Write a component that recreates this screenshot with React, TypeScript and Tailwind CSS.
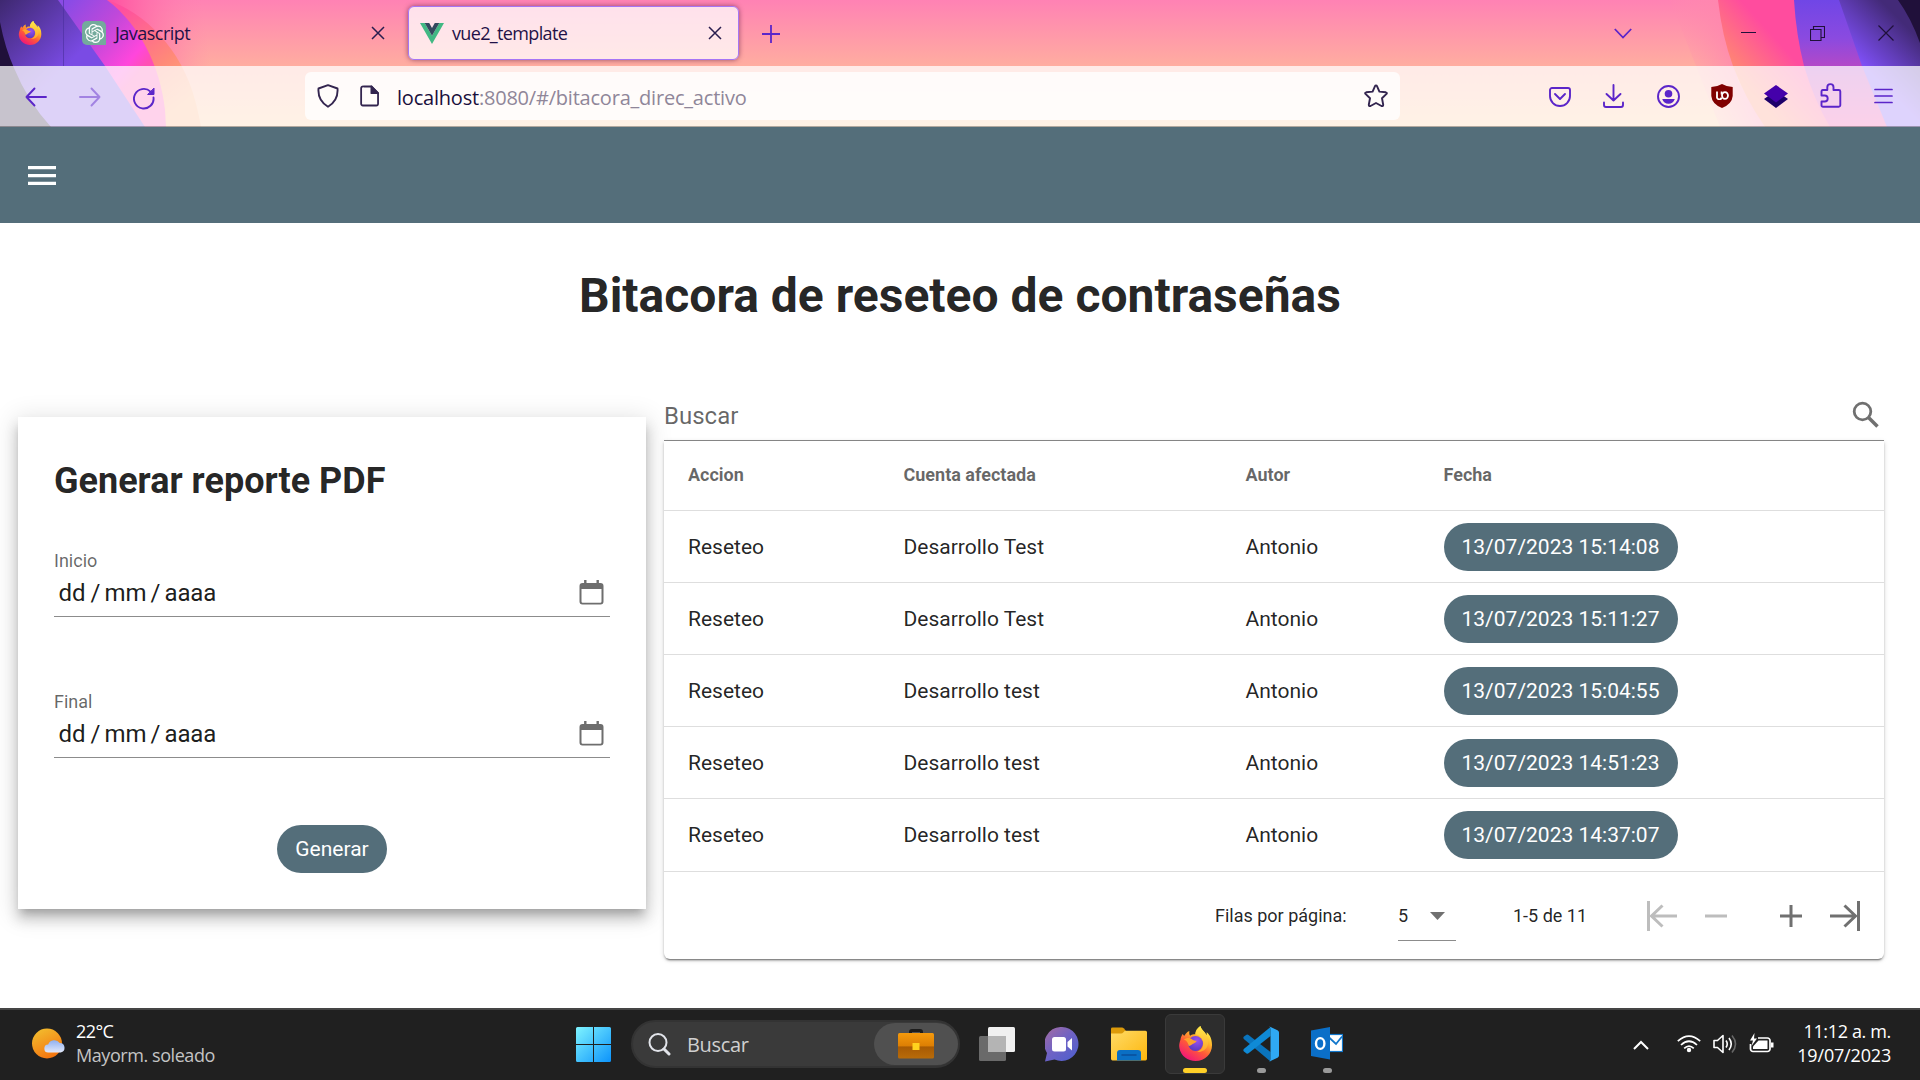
import React from "react";
import { SiOpenai } from "react-icons/si";

const segoe = "font-['Open_Sans','Noto_Sans',sans-serif]";

function ThemeArt() {
  return (
    <svg className="absolute inset-0 h-[127px] w-full" viewBox="0 0 1920 127" preserveAspectRatio="none">
      <defs>
        <linearGradient id="sky" x1="0" y1="0" x2="0" y2="1">
          <stop offset="0" stopColor="#ff82b4" />
          <stop offset="0.52" stopColor="#ffadA0" />
          <stop offset="1" stopColor="#ffcb9c" />
        </linearGradient>
        <linearGradient id="warm" gradientUnits="userSpaceOnUse" x1="120" y1="10" x2="190" y2="100">
          <stop offset="0" stopColor="#ff4f9f" />
          <stop offset="0.6" stopColor="#ff8a78" />
          <stop offset="1" stopColor="#ffb07c" />
        </linearGradient>
        <linearGradient id="pinkGlow" gradientUnits="userSpaceOnUse" x1="107" y1="0" x2="200" y2="-14">
          <stop offset="0" stopColor="#ff4fa0" />
          <stop offset="1" stopColor="#ff82b0" stopOpacity="0" />
        </linearGradient>
        <linearGradient id="magenta" gradientUnits="userSpaceOnUse" x1="70" y1="0" x2="145" y2="66">
          <stop offset="0" stopColor="#8a4be6" />
          <stop offset="0.45" stopColor="#c048da" />
          <stop offset="0.85" stopColor="#ff46dc" />
          <stop offset="1" stopColor="#ff4fb4" />
        </linearGradient>
        <linearGradient id="indigo" gradientUnits="userSpaceOnUse" x1="0" y1="0" x2="66" y2="66">
          <stop offset="0" stopColor="#3e2870" />
          <stop offset="1" stopColor="#7a4be4" />
        </linearGradient>
        <linearGradient id="rightWarm" gradientUnits="userSpaceOnUse" x1="1728" y1="66" x2="1768" y2="30">
          <stop offset="0" stopColor="#ff8a70" />
          <stop offset="1" stopColor="#ff4c9e" />
        </linearGradient>
        <linearGradient id="rightViolet" gradientUnits="userSpaceOnUse" x1="0" y1="0" x2="0" y2="126">
          <stop offset="0" stopColor="#7046e6" />
          <stop offset="0.3" stopColor="#8a4ae0" />
          <stop offset="0.6" stopColor="#c048c0" />
          <stop offset="1" stopColor="#f048a8" />
        </linearGradient>
        <linearGradient id="rightIndigo" gradientUnits="userSpaceOnUse" x1="1864" y1="66" x2="1905" y2="25">
          <stop offset="0" stopColor="#7e4ff5" />
          <stop offset="1" stopColor="#432a78" />
        </linearGradient>
        <linearGradient id="rightFade" gradientUnits="userSpaceOnUse" x1="1680" y1="60" x2="1740" y2="40">
          <stop offset="0" stopColor="#ff8cae" stopOpacity="0" />
          <stop offset="1" stopColor="#ff86ae" />
        </linearGradient>
      </defs>
      <rect width="1920" height="127" fill="url(#sky)" />
      <path d="M107 0H220V66H150Z" fill="url(#pinkGlow)" />
      <path d="M107 0C145 12 182 50 195 100Q199 115 201 127H60V0Z" fill="url(#warm)" />
      <path d="M58 0H107C140 25 160 66 165 110L166 127H60Z" fill="url(#magenta)" />
      <path d="M0 0H58L105 66L145 127H0Z" fill="url(#indigo)" />
      <path d="M0 22Q5 48 14 68Q28 102 51 127H0Z" fill="#20103a" />
      <path d="M1670 0H1722L1738 80L1765 127H1720Z" fill="url(#rightFade)" />
      <path d="M1718 0Q1722 36 1733 66Q1745 98 1765 127H1920V0Z" fill="url(#rightWarm)" />
      <path d="M1794 0Q1796 34 1804 66Q1814 100 1830 127H1920V0Z" fill="url(#rightViolet)" />
      <path d="M1839 0L1862 66L1887 127H1920V0Z" fill="url(#rightIndigo)" />
      <path d="M1898 0Q1911 18 1920 43V0Z" fill="#20103a" />
    </svg>
  );
}

function Firefox({ size, id }: { size: number; id: string }) {
  return (
    <svg width={size} height={size} viewBox="0 0 36 36" className="shrink-0">
      <defs>
        <linearGradient id={id + "a"} x1="0.85" y1="0.1" x2="0.3" y2="1">
          <stop offset="0" stopColor="#fff44f" />
          <stop offset="0.3" stopColor="#ffb52a" />
          <stop offset="0.6" stopColor="#ff5a38" />
          <stop offset="1" stopColor="#f0157a" />
        </linearGradient>
        <radialGradient id={id + "b"} cx="0.6" cy="0.3" r="0.7">
          <stop offset="0" stopColor="#9a50f0" />
          <stop offset="1" stopColor="#5a3ac0" />
        </radialGradient>
        <linearGradient id={id + "c"} x1="0" y1="0" x2="0" y2="1">
          <stop offset="0" stopColor="#ffe94a" />
          <stop offset="1" stopColor="#ffa52a" />
        </linearGradient>
      </defs>
      <path d="M5 8C3.5 10 2.8 12 2.6 14C1.500 17 .8 20 1.500 23C3 31 10 36 18 36C28 36 35 28.500 35 19.500C35 13.500 32.800 9 29.500 6.500C29.500 7.500 29.600 8.500 29.400 9.500C27.500 5 24 4 23 0C20 2 18 5 17.800 8.500C15 8 13.500 9 12.500 10C11.500 9 11.400 6.800 11.700 5.200C9.300 6 7.800 8 6.600 10C5.800 9.800 5.200 9 5 8Z" fill={`url(#${id}a)`} />
      <circle cx="18" cy="18" r="7.700" fill={`url(#${id}b)`} />
      <path d="M23 0C20 2 18 5 17.800 8.500C22 9 26.500 13 26 19C25.500 23 23 25.500 19.500 26.500C26 27.500 31 23 31 16.500C31 8 24.500 6 23 0Z" fill={`url(#${id}c)`} />
      <path d="M6 14C9 11.500 13 12 15 14.200C16 15.200 18 15 19.200 15.200C18.800 17 16.500 17.800 15 18.500C13.500 19.500 13 20.500 11 20.500C10 16.500 8.500 15 6 14Z" fill="#ffa22e" />
    </svg>
  );
}

function CloseX() {
  return (
    <svg width="14" height="14" viewBox="0 0 14 14" fill="none" stroke="#291d4f" strokeWidth="1.500" className="shrink-0">
      <path d="M1 1l12 12M13 1L1 13" />
    </svg>
  );
}

function TabStrip() {
  return (
    <div className="relative flex h-[66px] items-center text-[18px] text-[#1f1147]">
      <div className="flex h-full w-[64px] items-center border-r border-[#4a2e9c]/60 pl-[18px]">
        <Firefox size={24} id="ffp" />
      </div>
      <div className="flex h-full w-[344px] items-center pr-[23px] pl-[18px]">
        <div className="flex size-6 items-center justify-center rounded-l-[5px] rounded-tr-[5px] bg-[#74aa9c]">
          <SiOpenai size={19} color="#fff" />
        </div>
        <span className="ml-[9px] flex-1 tracking-[-0.52px]">Javascript</span>
        <CloseX />
      </div>
      <div className="flex h-[54px] w-[331px] items-center rounded-[6px] border border-[#a675f5] bg-white/75 pr-4 pl-[11px] shadow-[0_0_5px_rgba(80,20,60,0.6)]">
        <svg width="24" height="21" viewBox="0 0 24 21" className="shrink-0">
          <path d="M0 0H4.700L12 12.700L19.300 0H24L12 21Z" fill="#41b883" />
          <path d="M4.700 0H9.200L12 4.900L14.800 0H19.300L12 12.700Z" fill="#34495e" />
        </svg>
        <span className="ml-2 flex-1 tracking-[-0.65px]">vue2_template</span>
        <CloseX />
      </div>
      <svg className="mt-[2px] ml-[23px]" width="18" height="18" viewBox="0 0 18 18" stroke="#5b25c9" strokeWidth="1.800">
        <path d="M0 9h18M9 0v18" />
      </svg>
      <svg className="ml-auto" width="18" height="11" viewBox="0 0 18 11" fill="none" stroke="#5b25c9" strokeWidth="1.800">
        <path d="M.8 1L9 9.500L17.200 1" />
      </svg>
      <svg className="ml-[109px]" width="15" height="16" viewBox="0 0 15 16" stroke="#20103a">
        <path d="M0 7.500h15" />
      </svg>
      <svg className="ml-[54px]" width="15" height="15" viewBox="0 0 15 15" fill="none" stroke="#20103a" strokeWidth="1.100">
        <path d="M.5 3.500h10.500v11H.5zM3.500 3V.5h11v11H11" />
      </svg>
      <svg className="mr-[26px] ml-[53px]" width="16" height="16" viewBox="0 0 16 16" stroke="#20103a" strokeWidth="1.200">
        <path d="M.5.5l15 15M15.500.5l-15 15" />
      </svg>
    </div>
  );
}

function Toolbar() {
  const p = { fill: "none", stroke: "#5b25c9", strokeWidth: 1.9, strokeLinecap: "round" as const, strokeLinejoin: "round" as const };
  return (
    <div className="relative flex h-[61px] items-center border-b border-black/30 bg-white/75">
      <svg className="mt-[2px] ml-[25px]" width="22" height="20" viewBox="0 0 22 20" {...p}>
        <path d="M21 10H1.500M9.500 1.500L1.500 10l8 8.500" />
      </svg>
      <svg className="mt-[2px] ml-[32px] opacity-45" width="22" height="20" viewBox="0 0 22 20" {...p}>
        <path d="M1 10h19.500M12.500 1.500L20.500 10l-8 8.500" />
      </svg>
      <svg className="mt-[4px] ml-[32px]" width="23" height="23" viewBox="0 0 23 23" {...p}>
        <path d="M20.500 10.500A9.800 9.800 0 1 1 17.500 4.600" />
        <path d="M21 1.500v6h-6z" fill="#5b25c9" strokeWidth="1" />
      </svg>
      <div className="ml-[149px] flex h-12 w-[1095px] items-center rounded-[6px] bg-white/80 px-3">
        <svg width="22" height="24" viewBox="0 0 22 24" fill="none" stroke="#33254f" strokeWidth="1.900" strokeLinejoin="round">
          <path d="M11 1.200L20.500 4.500Q21.500 16.500 11 22.800Q.5 16.500 1.500 4.500Z" />
        </svg>
        <svg className="ml-[21px]" width="19" height="22" viewBox="0 0 20 22" fill="none" stroke="#33254f" strokeWidth="1.900" strokeLinejoin="round">
          <path d="M4 1h8l7 7v11.500a1.800 1.800 0 0 1-1.800 1.500H3A1.800 1.800 0 0 1 1.200 19V3A2 2 0 0 1 4 1Z" />
          <path d="M12 1v7h7z" fill="#33254f" />
        </svg>
        <span className="mt-[3px] ml-[18px] flex-1 text-[20px] tracking-[-0.21px] whitespace-nowrap text-[#8f8699]">
          <span className="text-[#1a0f3c]">localhost</span>:8080/#/bitacora_direc_activo
        </span>
        <svg width="24" height="24" viewBox="0 0 24 24" fill="none" stroke="#33254f" strokeWidth="1.900" strokeLinejoin="round">
          <path d="M12 1.500Q12.700 1.500 13 2.200L15.400 7.600L21.800 8.300Q23.400 8.700 22.500 9.900L18 14.300L19.200 20.700Q19.200 22.500 17.500 22L12 19L6.500 22Q4.800 22.500 4.800 20.700L6 14.300L1.500 9.900Q.6 8.700 2.200 8.300L8.600 7.600L11 2.200Q11.300 1.500 12 1.500Z" />
        </svg>
      </div>
      <svg className="mt-px ml-[149px]" width="22" height="20" viewBox="0 0 22 20" {...p}>
        <path d="M3 1h16a2 2 0 0 1 2 2v6a10 10 0 0 1-20 0V3a2 2 0 0 1 2-2Z" />
        <path d="M6 7l5 5l5-5" />
      </svg>
      <svg className="ml-8" width="21" height="24" viewBox="0 0 21 24" {...p}>
        <path d="M10.500 1v15.500M3.500 10l7 6.500l7-6.500M1 18.500v2.500a2 2 0 0 0 2 2h15a2 2 0 0 0 2-2v-2.500" />
      </svg>
      <svg className="mt-px ml-[33px]" width="23" height="23" viewBox="0 0 23 23" {...p}>
        <circle cx="11.500" cy="11.500" r="10.500" />
        <circle cx="11.500" cy="8.700" r="3.800" fill="#5b25c9" stroke="none" />
        <path d="M5.200 14h12.600q-1.500 4.700-6.300 4.700t-6.300-4.700z" fill="#5b25c9" stroke="none" />
      </svg>
      <div className="relative ml-[31px] flex h-6 w-[22px] items-center justify-center">
        <svg className="absolute inset-0" width="22" height="24" viewBox="0 0 22 24">
          <path d="M11 0Q15 2.500 21.700 3V12Q21 20 11 24Q1 20 .3 12V3Q7 2.500 11 0Z" fill="#800000" />
        </svg>
        <svg className="relative mb-[2px]" width="13" height="9" viewBox="0 0 13 9" fill="none" stroke="#fff" strokeWidth="1.800">
          <path d="M1 .5v5a2.300 2.300 0 0 0 4.600 1" />
          <path d="M5.600.5v3" />
          <ellipse cx="9" cy="4.500" rx="3" ry="3.400" />
        </svg>
      </div>
      <svg className="ml-[31px]" width="24" height="23" viewBox="0 0 24 23">
        <path d="M12 5.500L24 14L12 23L0 14Z" fill="#1c0069" />
        <path d="M12 0L24 8.500L12 17.500L0 8.500Z" fill="#4400aa" />
      </svg>
      <svg className="mb-[2px] ml-[32px]" width="22" height="25" viewBox="0 0 22 25" {...p}>
        <path d="M2.700 7H7.300V4.200A3 3 0 0 1 13.500 4.200V7H18.800A1.500 1.500 0 0 1 20.300 8.500V22A1.500 1.500 0 0 1 18.800 23.700H3A1.500 1.500 0 0 1 1.500 22.200V18.500H4.700A3 3 0 0 0 4.700 12.500H1.500V8.500A1.500 1.500 0 0 1 2.700 7Z" />
      </svg>
      <svg className="mb-[1px] ml-[32px]" width="19" height="16" viewBox="0 0 19 16" {...p} strokeWidth="1.700">
        <path d="M1 1.500h17M1 8h17M1 14.500h17" />
      </svg>
    </div>
  );
}

function DateField({ label }: { label: string }) {
  return (
    <div className="flex h-[70px] flex-col border-b border-[#8c8c8c]">
      <span className="h-[28px] text-[18px] leading-[28px] text-black/60">{label}</span>
      <div className="flex h-9 items-center pr-[6px] pl-[4.500px] text-[24px] leading-9 text-black/90">
        <span>dd</span>
        <span className="ml-[5px]">/</span>
        <span className="ml-[4px]">mm</span>
        <span className="ml-[4px]">/</span>
        <span className="ml-[4px] flex-1 tracking-[-0.15px]">aaaa</span>
        <svg className="mb-[2px]" width="25" height="25" viewBox="0 0 25 25">
          <path d="M3.500 3H21.500A3 3 0 0 1 24.500 6V21.500A3 3 0 0 1 21.500 24.500H3.500A3 3 0 0 1 .5 21.500V6A3 3 0 0 1 3.500 3ZM2.500 9V21.500A1.200 1.200 0 0 0 3.700 22.700H21.300A1.200 1.200 0 0 0 22.500 21.500V9Z" fill="#6e6e6e" fillRule="evenodd" />
          <path d="M6.300 0V4M18.700 0V4" stroke="#6e6e6e" strokeWidth="2.400" />
        </svg>
      </div>
    </div>
  );
}

function ReportCard() {
  return (
    <section className="mt-[24px] ml-[18px] flex h-[492px] w-[628px] flex-col bg-white px-9 shadow-[0_7px_8px_-4px_rgba(0,0,0,0.2),0_10px_12px_1px_rgba(0,0,0,0.16),0_4px_24px_3px_rgba(0,0,0,0.12)]">
      <h2 className="mt-[36px] h-14 text-[36px] leading-[56px] font-bold text-black/87">Generar reporte PDF</h2>
      <div className="mt-[38px] flex flex-col gap-[71px]">
        <DateField label="Inicio" />
        <DateField label="Final" />
      </div>
      <button className="mx-auto mt-[67px] h-12 w-[110px] rounded-full bg-[#546e7a] pt-[2px] text-[21px] text-white">Generar</button>
    </section>
  );
}

const rows = [
  ["Desarrollo Test", "13/07/2023 15:14:08"],
  ["Desarrollo Test", "13/07/2023 15:11:27"],
  ["Desarrollo test", "13/07/2023 15:04:55"],
  ["Desarrollo test", "13/07/2023 14:51:23"],
  ["Desarrollo test", "13/07/2023 14:37:07"],
];

function LogTable() {
  const cols = "grid grid-cols-[215.5px_342px_198px_1fr] items-center pl-6";
  return (
    <section className="ml-[18px] flex w-[1220px] flex-col">
      <div className="flex h-[48px] items-center justify-between border-b border-[#8c8c8c] pr-[4px] pb-[2px] text-[24px] text-black/60">
        <span>Buscar</span>
        <svg className="mb-[2px]" width="28" height="28" viewBox="0 0 28 28" fill="none" stroke="#707070">
          <circle cx="10.500" cy="10.500" r="8.300" strokeWidth="2.800" />
          <path d="M16.500 16.500L25.500 25.500" strokeWidth="3.600" />
        </svg>
      </div>
      <div className="flex h-[518px] flex-col rounded-b-[6px] bg-white shadow-[0_3px_1px_-2px_rgba(0,0,0,0.3),0_2px_2px_0_rgba(0,0,0,0.2),0_1px_5px_0_rgba(0,0,0,0.16)]">
        <div className={`${cols} h-[70px] border-b border-[#dedede] pb-[2px] text-[18px] font-bold text-black/60`}>
          <span>Accion</span>
          <span>Cuenta afectada</span>
          <span>Autor</span>
          <span>Fecha</span>
        </div>
        {rows.map(([cuenta, fecha]) => (
          <div key={fecha} className={`${cols} h-[72px] border-b border-[#dedede] text-[21px] text-black/87 nth-[6]:h-[73px]`}>
            <span className="pt-[2px]">Reseteo</span>
            <span className="pt-[2px]">{cuenta}</span>
            <span className="pt-[2px]">Antonio</span>
            <span className="flex h-12 w-[234px] items-center justify-center rounded-full bg-[#546e7a] pt-[2px] text-white">{fecha}</span>
          </div>
        ))}
        <div className="flex flex-1 items-center text-[18px] text-black/87">
          <span className="ml-[551px] w-[183px]">Filas por página:</span>
          <div className="mt-[1px] flex h-[50px] w-[58px] items-center border-b border-[#8c8c8c]">
            <span className="w-[32px]">5</span>
            <svg width="15" height="8" viewBox="0 0 15 8" fill="#707070">
              <path d="M0 0h15L7.500 8z" />
            </svg>
          </div>
          <span className="ml-[57px] w-[134px]">1-5 de 11</span>
          <svg width="30" height="30" viewBox="0 0 30 30" fill="none" stroke="#bdbdbd" strokeWidth="3">
            <path d="M1.500 0v30M30 15H4M15.500 4.500L4.500 15l11 10.500" />
          </svg>
          <svg className="ml-[28px]" width="22" height="22" viewBox="0 0 22 22" stroke="#bdbdbd" strokeWidth="3">
            <path d="M0 11h22" />
          </svg>
          <svg className="ml-[53px]" width="22" height="22" viewBox="0 0 22 22" stroke="#707070" strokeWidth="3">
            <path d="M0 11h22M11 0v22" />
          </svg>
          <svg className="ml-[28px]" width="30" height="30" viewBox="0 0 30 30" fill="none" stroke="#707070" strokeWidth="3">
            <path d="M28.500 0v30M0 15h26M14.500 4.500L25.500 15l-11 10.500" />
          </svg>
        </div>
      </div>
    </section>
  );
}

function Taskbar() {
  return (
    <footer className={`${segoe} flex h-[72px] items-center border-t-2 border-[#454545] bg-[#202020] pb-[2px] text-[18px] leading-6 text-white`}>
      <svg className="mb-[2px] ml-[32px] shrink-0" width="33" height="31" viewBox="0 0 33 31">
        <defs>
          <linearGradient id="sun" x1="0.2" y1="0" x2="0.7" y2="1">
            <stop offset="0" stopColor="#f2bd2e" />
            <stop offset="1" stopColor="#f4710e" />
          </linearGradient>
          <linearGradient id="cloud" x1="0" y1="0" x2="0" y2="1">
            <stop offset="0" stopColor="#8fb0f0" />
            <stop offset="1" stopColor="#e3e9fb" />
          </linearGradient>
        </defs>
        <circle cx="15" cy="15.500" r="15" fill="url(#sun)" />
        <path d="M16.500 24.500a4 4 0 0 1-.3-8a6.500 6.500 0 0 1 11.500-1.500a4.800 4.800 0 0 1 1 9.500z" fill="url(#cloud)" />
      </svg>
      <div className="ml-[11px] w-[500px] -translate-y-px whitespace-nowrap">
        <div className="tracking-[-0.6px]">22°C</div>
        <div className="tracking-[-0.43px] text-[#c4c4c4]">Mayorm. soleado</div>
      </div>
      <svg className="shrink-0" width="35" height="35" viewBox="0 0 35 35">
        <defs>
          <linearGradient id="win" x1="0" y1="0" x2="1" y2="1">
            <stop offset="0" stopColor="#7ff4ff" />
            <stop offset="1" stopColor="#0c93fb" />
          </linearGradient>
        </defs>
        <path d="M1.500 0H17V17H0V1.500Q0 0 1.500 0ZM18 0H33.500Q35 0 35 1.500V17H18ZM0 18H17V35H1.500Q0 35 0 33.500ZM18 18H35V33.500Q35 35 33.500 35H18Z" fill="url(#win)" />
      </svg>
      <div className="mr-[19px] ml-[20px] flex h-12 w-[329px] shrink-0 items-center rounded-full border-2 border-[#333] bg-[#3a3a3a]">
        <svg className="ml-[15px]" width="23" height="23" viewBox="0 0 23 23" fill="none" stroke="#e2e4ea" strokeLinecap="round">
          <circle cx="10" cy="9.500" r="8.500" strokeWidth="2" />
          <path d="M16 16l5 5" strokeWidth="3" />
        </svg>
        <span className="ml-[16px] flex-1 pt-px text-[20px] tracking-[-0.35px] text-[#d0d0d0]">Buscar</span>
        <div className="flex h-[42px] w-[84px] items-center justify-center rounded-full bg-[#505050]">
          <svg width="36" height="30" viewBox="0 0 36 30">
            <defs>
              <linearGradient id="bag" x1="0" y1="0" x2="0" y2="1">
                <stop offset="0" stopColor="#f59a0c" />
                <stop offset="0.5" stopColor="#dd7f04" />
                <stop offset="0.55" stopColor="#a85a03" />
                <stop offset="1" stopColor="#b86c0a" />
              </linearGradient>
            </defs>
            <path d="M12.500 5V3Q12.500 1.500 14 1.500H22Q23.500 1.500 23.500 3V5" fill="none" stroke="#1c1c1c" strokeWidth="3" />
            <rect y="4" width="36" height="25.500" rx="1.500" fill="url(#bag)" />
            <rect x="14.500" y="14" width="7" height="7" fill="#ffd21e" />
          </svg>
        </div>
      </div>
      <svg className="shrink-0" width="36" height="34" viewBox="0 0 36 34">
        <rect x="9" width="27" height="25" rx="1.500" fill="#f0f0f0" />
        <rect y="9" width="27" height="25" rx="1.500" fill="#6a6a6a" />
        <path d="M9 9h18v16H9z" fill="#b4b4b4" />
      </svg>
      <svg className="ml-[30px] shrink-0" width="34" height="35" viewBox="0 0 34 35">
        <defs>
          <linearGradient id="chat" x1="0.1" y1="0.1" x2="0.8" y2="0.9">
            <stop offset="0" stopColor="#9a6aa8" />
            <stop offset="0.5" stopColor="#6f62c4" />
            <stop offset="1" stopColor="#5560cc" />
          </linearGradient>
        </defs>
        <path d="M17 0A17 17 0 1 1 9.500 32.500L0 34.500L2 26A17 17 0 0 1 17 0Z" fill="url(#chat)" />
        <rect x="7" y="10" width="14" height="14.500" rx="2.500" fill="#fff" />
        <path d="M22.500 15L27 11V23.500L22.500 19.500Z" fill="#fff" />
      </svg>
      <svg className="ml-[32px] shrink-0" width="36" height="34" viewBox="0 0 36 34">
        <defs>
          <linearGradient id="fold" x1="0" y1="0" x2="1" y2="1">
            <stop offset="0" stopColor="#ffdb67" />
            <stop offset="1" stopColor="#fdb60c" />
          </linearGradient>
        </defs>
        <path d="M0 1.500Q0 .5 1.500.5H11Q12 .5 13 1.500L15 4V8H0Z" fill="#dc9a0a" />
        <path d="M0 6.500H10Q11.500 6.500 12.500 5.200Q13.500 3.800 15 3.800H34.500Q36 3.800 36 5.300V31.500Q36 33.500 34.500 33.500H1.500Q0 33.500 0 31.500Z" fill="url(#fold)" />
        <path d="M6 33.500V26Q6 23 9 23H27Q30 23 30 26V33.500Z" fill="#0a6fc4" />
        <path d="M11 28h14" stroke="#0a4f9a" strokeWidth="1.500" strokeLinecap="round" />
      </svg>
      <div className="ml-[18px] flex h-[60px] w-[60px] shrink-0 flex-col items-center rounded-[6px] border border-[#3a3a3a] bg-[#2d2d2d] pt-[11px]">
        <Firefox size={35} id="fft" />
        <div className="mt-[7px] h-[5px] w-6 shrink-0 rounded-full bg-[#ffd028]" />
      </div>
      <div className="ml-[18px] flex h-[60px] w-9 shrink-0 flex-col items-center pt-[12px]">
        <svg width="36" height="36" viewBox="0 0 36 36" className="shrink-0">
          <path d="M1 10.500L3.500 8.800Q4.500 8.300 5.500 9L27.500 26V35.500L.8 13Q-.2 11.500 1 10.500Z" fill="#0a74bd" />
          <path d="M1 25.500L3.500 27.500Q4.500 28 5.500 27.300L27.500 10V1L.8 23Q-.2 24.500 1 25.500Z" fill="#0f8ad6" />
          <path d="M26 .3L34.500 4.300Q36 5 36 6.500V29.500Q36 31 34.500 31.700L26 35.800Q27.500 35 27.500 33V3Q27.500 1 26 .3Z" fill="#2fa9f4" />
        </svg>
        <div className="mt-[6px] h-[5px] w-[9px] shrink-0 rounded-full bg-[#9a9a9a]" />
      </div>
      <div className="ml-[30px] flex h-[60px] w-9 shrink-0 flex-col items-center pt-[13px]">
        <svg width="32" height="33" viewBox="0 0 32 33" className="shrink-0">
          <rect x="16" y="7.500" width="15.500" height="17" fill="#fff" stroke="#1277cc" strokeWidth="1.200" />
          <path d="M17 9.500L25 17L31 9.500" fill="none" stroke="#1277cc" strokeWidth="1.800" />
          <path d="M0 3.500L19 0V32.500L0 29Z" fill="#0b6fc8" />
          <ellipse cx="9.200" cy="16.500" rx="4.200" ry="5.400" fill="none" stroke="#fff" strokeWidth="2.400" />
        </svg>
        <div className="mt-[8px] h-[5px] w-[9px] shrink-0 rounded-full bg-[#9a9a9a]" />
      </div>
      <svg className="mt-[2px] ml-auto shrink-0" width="16" height="10" viewBox="0 0 16 10" fill="none" stroke="#fff" strokeWidth="2">
        <path d="M1 9L8 2l7 7" />
      </svg>
      <svg className="ml-[28px] shrink-0" width="24" height="18" viewBox="0 0 24 18" fill="none" stroke="#fff" strokeWidth="1.700">
        <path d="M.8 6.200Q12-4 23.200 6.200M4 10Q12 2.500 20 10M7.200 13.300Q12 8.800 16.800 13.300" />
        <circle cx="12" cy="15" r="2.200" fill="#fff" stroke="none" />
      </svg>
      <svg className="ml-[12px] shrink-0" width="24" height="20" viewBox="0 0 24 20" fill="none" stroke="#fff" strokeWidth="1.600" strokeLinejoin="round">
        <path d="M1 6.500H4.500L10 1.500V18.500L4.500 13.500H1ZM13 6.500Q15.500 10 13 13.500M16 4Q20.500 10 16 16" />
        <path d="M19 1.500Q26 10 19 18.500" stroke="#666" />
      </svg>
      <svg className="mb-[3px] ml-[12px] shrink-0" width="25" height="20" viewBox="0 0 25 20">
        <path d="M9 5H18.500A2.500 2.500 0 0 1 21 7.500V16A2.500 2.500 0 0 1 18.500 18.500H4A2.500 2.500 0 0 1 1.500 16V11" fill="none" stroke="#fff" strokeWidth="1.700" />
        <path d="M9.500 7.500H18.500V16H4V13.500Z" fill="#fff" />
        <path d="M22 9.500h2.500v5H22zM5.500 0L1 7.500H4L2.500 13L8 5.500H5z" fill="#fff" />
      </svg>
      <div className="mr-[29px] ml-[22px] w-[95px] shrink-0 -translate-y-px text-right whitespace-nowrap">
        <div className="tracking-[-0.35px]">11:12 a. m.</div>
        <div className="tracking-[-0.18px]">19/07/2023</div>
      </div>
    </footer>
  );
}

export default function App() {
  return (
    <div className="flex h-[1080px] w-[1920px] flex-col overflow-hidden bg-white font-['Roboto',sans-serif]">
      <header className={`${segoe} relative h-[127px] shrink-0`}>
        <ThemeArt />
        <TabStrip />
        <Toolbar />
      </header>
      <nav className="flex h-24 shrink-0 items-center bg-[#546e7a] pt-px pl-7">
        <svg width="28" height="20" viewBox="0 0 28 20" fill="#fff">
          <path d="M0 0h28v3.300H0zM0 8h28v3.300H0zM0 15.700h28v3.300H0z" />
        </svg>
      </nav>
      <main className="flex flex-1 flex-col">
        <h1 className="mt-[41px] h-16 text-center text-[48px] leading-[64px] font-bold text-black/87">Bitacora de reseteo de contraseñas</h1>
        <div className="mt-[65px] flex items-start">
          <ReportCard />
          <LogTable />
        </div>
      </main>
      <Taskbar />
    </div>
  );
}
